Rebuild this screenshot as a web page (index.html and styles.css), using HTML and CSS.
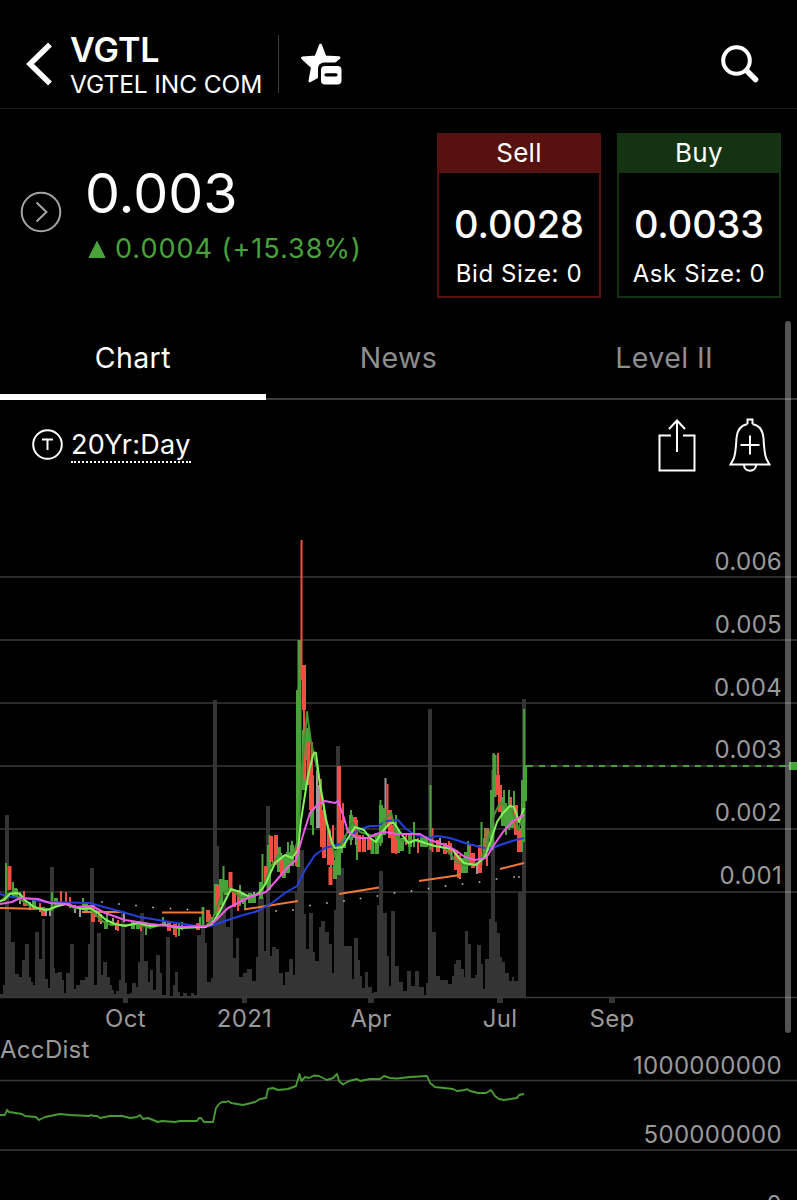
FILE: index.html
```html
<!DOCTYPE html>
<html lang="en">
<head>
  <meta charset="utf-8" />
  <meta name="viewport" content="width=device-width, initial-scale=1" />
  <title>VGTL – VGTEL INC COM</title>
  <link rel="stylesheet" href="styles.css">
</head>
<body>
  <header class="topbar">
    <svg class="back" viewBox="0 0 26 44" aria-label="Back"><path d="M24 2.5 4 22l20 19.5" /></svg>
    <div class="symbol">
      <h1>VGTL</h1>
      <p>VGTEL INC COM</p>
    </div>
    <svg class="watch" viewBox="0 0 42 42" aria-label="Remove from watchlist">
      <path class="star" d="M20.5 2.2 25 14l14 .7-9.500 8-8.500 2-2 8-9 5 2.500-13.500L2.500 15l13.500-1z" />
      <rect class="knock" x="18" y="19.500" width="26" height="24" rx="6" />
      <rect class="badge" x="21" y="23" width="20.500" height="18.500" rx="4" />
      <path class="minus" d="M26 31.800h10" />
    </svg>
    <svg class="search" viewBox="0 0 38 38" aria-label="Search">
      <circle cx="15.500" cy="15.500" r="13.300" />
      <path class="handle" d="m26 26 8.500 8.500" />
    </svg>
  </header>

  <section class="quote">
    <svg class="expand" viewBox="0 0 42 42"><circle cx="21" cy="21" r="19.300" /><path d="m16.500 11.500 10 9.500-10 9.500" /></svg>
    <div class="last">
      <p class="price">0.003</p>
      <p class="change"><svg viewBox="0 0 18 19"><path d="M9 1.500 17 17.500H1z" /></svg><span>0.0004 (+15.38%)</span></p>
    </div>
    <div class="side sell">
      <h2>Sell</h2>
      <p class="amount">0.0028</p>
      <p class="size">Bid Size: 0</p>
    </div>
    <div class="side buy">
      <h2>Buy</h2>
      <p class="amount">0.0033</p>
      <p class="size">Ask Size: 0</p>
    </div>
  </section>

  <nav class="tabs">
    <a class="active">Chart</a>
    <a>News</a>
    <a>Level II</a>
  </nav>

  <div class="toolbar">
    <svg class="time" viewBox="0 0 31 31"><circle cx="15.500" cy="15.500" r="14.300" /><path d="M10 10.500h11M15.500 10.500v10.500" /></svg>
    <span class="range">20Yr:Day</span>
    <svg class="share" viewBox="0 0 40 54" aria-label="Share"><path d="M14 17.500H2.500V52.500H37.500V17.500H26M20 34V2.500M12 11l8-8.500 8 8.500" /></svg>
    <svg class="alert" viewBox="0 0 42 54" aria-label="Add alert">
      <path d="M18.500 6V1.500h5V6M18.500 6C11 7.500 8 13 7.500 20 7 30 6.500 37 4.500 41L1.500 46.500h39L37.500 41C35.500 37 35 30 34.500 20 34 13 31 7.500 23.500 6M15 47c0 7.500 12 7.500 12 0M11.500 27h19M21 17.500v19" />
    </svg>
  </div>

  <svg class="chart" viewBox="0 480 797 720">
    <!-- volume -->
    <path class="volume" d="M0 998V994H3V985H5V815H9V912H11V942H15V974H19V977H22V960H25V944H29V977H31V982H33V985H35V932H39V959H42V919H45V979H48V988H50V867H54V968H55V973H58V972H62V980H64V993H66V973H70V944H74V989H76V985H80V980H85V977H88V944H90V868H94V985H97V933H101V975H103V962H107V977H110V985H112V990H114V994H116V991H119V980H121V911H125V983H127V994H130V993H132V983H136V987H138V962H140V913H144V961H148V982H150V970H153V990H156V955H160V973H162V995H166V937H170V996H173V985H175V972H178V992H180V996H183V993H187V996H191V993H194V995H197V935H201V907H205V943H207V982H211V978H213V700H217V846H219V883H222V890H226V927H230V907H233V958H236V938H239V977H243V973H247V969H252V981H256V957H258V897H264V951H266V806H270V956H272V947H276V949H279V973H283V985H285V972H289V959H293V975H295V892H297V687H299V850H304V914H306V949H309V913H313V952H315V961H319V927H321V921H325V932H329V944H332V973H334V910H336V746H340V868H344V946H352V979H354V938H358V960H360V976H362V988H365V972H368V987H372V993H374V992H377V905H379V871H383V913H387V956H389V986H391V911H395V966H399V982H403V991H407V971H411V986H415V971H419V987H424V995H426V983H428V709H432V932H436V976H440V980H448V984H452V976H454V964H456V960H461V969H464V977H465V931H468V944H471V978H475V975H477V945H481V964H483V989H485V959H489V919H491V770H495V922H497V933H500V957H502V962H505V973H509V981H512V977H514V981H518V892H522V699H526V998z" />

    <path class="grid" d="M0 577H797M0 640H797M0 703H797M0 766H797M0 829H797M0 892H797M0 997.500H797M0 1080.500H797M0 1150H797" />
    <path class="tick" d="M123 998v5h5v-5zM242 998v5h5v-5zM368 998v5h6v-5zM497 998v5h6v-5zM609 998v5h6v-5z" />

    <!-- candles: flat, up, down -->
    <path class="flat" d="M20 897V904M30 902V910M46 908V916M50 908V916M75 905V913M80 907V917M96 910V917M101 915V924M113 918V925M124 912V922M116 925V930M165 921V926M212 917V925M242 893V900M254 892V902M281 853V862M317 770V828M319 785V828M385.500 778V825M440 838V848M451.500 848V860M460 868V879M477 862V874M494 754V760M356 833V845" />
    <path class="up wide" d="M15 888V898M34 900V909M56 898V907M86 903V912M106 921V929M133 921V929M138 921V929M112 921V926M216 884V915M221 879V905M226 880V895M244 894V904M250 893V903M254 894V903M261 882V899M269 845V890M279 847V872M284 855V878M288 852V873M292 845V866M299.500 640V800M298 690V867M304 730V790M308 728V760M312 775V825M335 860V879M339 790V875M351 815V840M372.500 840V854M377 835V854M381 805V843M384 808V835M398 830V853M402 838V851M410 835V847M422 837V847M426 837V847M463 858V873M466 852V873M492 790V850M494.500 755V797M503 797V826M508 810V828M512 808V828M521 828V852M523 780V842M525 765V801" />
    <path class="up" d="M6 863V895M13 882V897M17 889V898M20 892V901M52 892V911M83 898V909M107 913V925M146 922V935M163 917V926M179 923V936M182 922V930M200 917V928M203 907V925M223.500 866V893M240 885V906M245 895V910M262.500 854V892M269.500 835V875M288 842V873M292 841V866M313 780V835M331 845V870M336 850V879M342 820V853M345 835V848M351 810V845M357 820V860M380.500 800V846M396 815V840M409.500 835V854M414 822V847M430.500 785V850M468 841V862M481.500 822V865M484 838V858M493.500 753V797M504 790V815M509 790V830M514 791V820M524.200 709V822M506 803V835" />
    <path class="down wide" d="M9.500 866V890M25 900V906M43 907V916M93 905V922M100 914V922M169 922V931M175 924V935M198 923V930M208 910V922M218 885V912M230.500 872V892M234 892V907M266 866V882M276 835V865M271 836V862M282 860V876M304 665V710M308.500 742V785M311 770V810M324 810V858M329 830V865M330.500 867V885M339 766V845M355 817V838M364 838V852M369 838V850M359 835V852M390 810V838M393 825V853M438 840V852M445 843V854M456 850V870M459 855V878M473 853V868M480 845V873M498 775V795M500 785V812M516 805V835M519 830V852" />
    <path class="down" d="M24 891V900M40 903V912M61 891V903M66 892V903M70 897V908M117 922V929M118 920V931M141 922V931M176 924V937M210 914V925M238 890V911M301.500 540V680M304 700V780M312 742V810M321 779V847M333 825V865M343 803V845M363 835V852M387.500 784V825M396 840V854M406 835V845M418 838V853M432.500 828V852M449 841V854M470 845V865M487 855V866M498 753V790M511 797V808M296 846V866M451 843V852" />
    <path class="mixed" d="M484 828H489V851H484z" />

    <!-- moving averages -->
    <path class="ma dots" d="M102 902h0M119 904h0M136 905.500h0M153 907.500h0M170.500 908.500h0M187.500 909.500h0M257 911h0M276 911h0M293 910h0M310 905.500h0M327 903h0M344 901h0M360.500 898.500h0M377.500 896h0M394.500 893h0M411.500 891h0M428.500 888.500h0M445.500 886h0M462.500 884h0M479.500 882h0M496.500 879h0M514 877h0M519 877h0" />
    <path class="ma orange" d="M0 908L42 909M82 912H123M162 912.500H204M244 909.500L298 901M339 894L379 887.500M419 881L460 875M500 869L524 863" />
    <path class="ma blue" d="M0 894 10 897 25 898 45 902 90 903 100 906 115 910 140 917 170 922 190 925 205 927 214 925 225 921 240 916 258 911 272 903 285 893 297 886 305 870 315 855 325 848 340 844 348 838 358 830 370 826 378 826 386 821 398 820 405 828 415 835 430 838 437 836 450 838 465 843 480 847 490 849 500 845 512 841 524 838" />
    <path class="ma green" d="M0 902 8 894 13 892 20 899 28 905 40 909 50 910 57 905 66 904 75 908 90 909 98 917 106 924 125 925 138 924 150 928 163 924 175 928 182 927 205 927 213 918 222 893 230 888 240 897 250 898 262 891 270 868 278 855 292 858 298 840 302 770 307 712 311 742 318 772 326 818 335 857 340 846 346 835 352 822 360 832 370 835 378 838 385 820 391 812 396 835 402 841 415 840 430 845 445 848 455 860 464 866 478 863 486 850 494 815 500 803 505 805 512 810 518 830 524 812" />
    <path class="ma lime" d="M0 901 4 900 10 894 16 893 20 894 25 900 34 907 45 910 50 909 58 906 66 904 75 907 83 909 90 908 98 913 106 920 115 924 125 926 138 923 150 926 165 925 180 928 205 927 212 924 220 911 231 889 240 892 250 897 258 894 265 885 275 863 285 855 292 858 298 850 301 820 308 776 313 755 314.500 752.500 316 753 320 785 326 820 332 843 335 848 343 847 348 838 355 827 364 830 370 838 376 842 382 832 390 823 394 823 400 832 408 843 416 840 425 843 435 846 452 849 458 857 464 863 476 865 485 857 491 840 497 822 503 813 510 806 514 807 519 822 524 808" />
    <path class="ma magenta" d="M0 904 12 902 20 898 38 899 50 903 68 904 75 907 92 906 105 913 125 920 150 924 180 927 207 926 214 922 228 908 240 902 250 897 266 892 275 882 288 867 296 860 303 835 310 813 318 804 325 801 335 803 338 801 344 818 348 832 358 838 368 838 376 834 385 832 396 834 410 834 420 834 430 840 445 845 455 850 465 857 475 860 486 858 494 845 503 832 513 821 520 817 524 815" />

    <!-- last price marker -->
    <path class="last-line" d="M527 766H790" />
    <path class="last-flag" d="M789 762h8v8h-8z" />

    <!-- accumulation / distribution -->
    <path class="acc" d="M0 1115 5 1115 7 1110 9 1112 22 1114 25 1116 36 1117 39 1120 45 1117 55 1115 60 1114 70 1115 89 1116 91 1115 94 1116 97 1116 100 1118 110 1116 122 1116 130 1118 137 1117 140 1115 143 1119 148 1118 153 1120 158 1122 162 1121 175 1122 180 1121 197 1121 199 1118 201 1118 204 1122 213 1122 216 1108 219 1104 222 1102 226 1102 228 1101 231 1103 243 1105 255 1102 260 1099 266 1098 268 1089 273 1088 278 1090 288 1089 296 1086 299.500 1074 301.500 1081 305 1077 309 1078 314 1075.500 319 1076 327 1080 333 1078 337 1074 339 1081 343 1084.500 349 1081 357 1079 360 1081 370 1079 380 1079 384 1076 390 1078 397 1078.500 410 1077 427 1076 430 1083 435 1087 453 1089 457 1091 465 1090 467 1089 470 1091 478 1093 486 1093 491 1090 495 1096 499 1099 504 1100 517 1098 519 1095 524 1094" />

    <g class="labels end">
      <text x="782" y="569.500">0.006</text>
      <text x="782" y="632.500">0.005</text>
      <text x="782" y="695.500">0.004</text>
      <text x="782" y="758">0.003</text>
      <text x="782" y="821">0.002</text>
      <text x="782" y="884">0.001</text>
      <text x="782" y="1073.500">1000000000</text>
      <text x="782" y="1143">500000000</text>
      <text x="782" y="1212.500">0</text>
    </g>
    <g class="labels mid">
      <text x="125.500" y="1027">Oct</text>
      <text x="244.500" y="1027">2021</text>
      <text x="371" y="1027">Apr</text>
      <text x="500" y="1027">Jul</text>
      <text x="612" y="1027">Sep</text>
    </g>
    <text class="labels" x="0" y="1057.500">AccDist</text>
  </svg>

  <div class="scroll-thumb"></div>
</body>
</html>
```

FILE: styles.css
```css
:root{
  --red:#57120f;
  --green:#143312;
  --up:#49a23a;
  --muted:#9a9a9a;
  --line:#3a3a3a;
}

*,*::before,*::after{box-sizing:border-box;margin:0;padding:0;}

body{
  position:relative;
  width:797px;
  height:1200px;
  overflow:hidden;
  background:#000;
  color:#fff;
  font-family:Inter,"Liberation Sans",sans-serif;
}

svg{display:block;flex:none;fill:none;stroke:#fff;}

/* Header */
.topbar{
  display:flex;
  align-items:center;
  height:109px;
  padding:19px 38px 0 26px;
  border-bottom:1px solid #1c1c1c;
}
.back{width:26px;height:44px;stroke-width:5.500;}
.symbol{
  display:flex;
  flex-direction:column;
  width:209px;
  height:58px;
  margin-left:18px;
  border-right:1px solid #3a3a3a;
}
.symbol h1{font-size:34px;line-height:30px;font-weight:600;padding-bottom:4px;}
.symbol p{font-size:24.500px;line-height:30px;letter-spacing:-.1px;white-space:nowrap;}
.watch{width:42px;height:42px;margin-left:21px;}
.star{fill:#fff;stroke-width:3;stroke-linejoin:round;}
.knock{fill:#000;stroke:none;}
.badge{fill:#fff;stroke:none;}
.minus{stroke:#000;stroke-width:3.200;stroke-linecap:round;}
.search{width:38px;height:38px;margin-left:auto;stroke-width:4;}
.handle{stroke-width:5.500;stroke-linecap:round;}

/* Quote */
.quote{
  display:flex;
  align-items:flex-start;
  height:211px;
  padding:24px 16px 0 20px;
}
.expand{width:42px;height:42px;margin-top:58px;stroke:#a5a5a5;stroke-width:2;}
.last{flex:1;padding:26px 0 0 23px;}
.price{font-size:55.500px;line-height:68px;}
.change{
  display:flex;
  align-items:center;
  gap:9px;
  padding:4px 0 0 3px;
  font-size:27px;
  line-height:36px;
  letter-spacing:1px;
  color:var(--up);
  white-space:nowrap;
}
.change svg{width:18px;height:19px;fill:var(--up);stroke:var(--up);stroke-linejoin:round;}
.side{width:164px;height:165px;border:2px solid;text-align:center;white-space:nowrap;}
.side + .side{margin-left:16px;}
.side h2{height:38px;font-size:26px;line-height:35px;font-weight:400;letter-spacing:.3px;}
.sell{border-color:var(--red);}
.sell h2{background:var(--red);}
.buy{border-color:var(--green);}
.buy h2{background:var(--green);}
.amount{padding-top:28px;font-size:38px;line-height:46px;font-weight:500;letter-spacing:-.1px;}
.size{padding-top:12px;font-size:24px;line-height:30px;letter-spacing:.6px;}

/* Tabs */
.tabs{display:flex;height:80px;border-bottom:2px solid var(--line);}
.tabs a{
  flex:1;
  height:80px;
  padding-bottom:4px;
  text-align:center;
  font-size:28.500px;
  line-height:76px;
  letter-spacing:.4px;
  color:#8e8e8e;
}
.tabs .active{color:#fff;border-bottom:6px solid #fff;}

/* Chart toolbar */
.toolbar{
  display:flex;
  align-items:flex-start;
  height:80px;
  padding:18px 26px 0 32px;
}
.time{width:31px;height:31px;margin-top:11px;stroke-width:2;}
.range{
  margin:10px 0 0 8px;
  font-size:27px;
  line-height:33px;
  letter-spacing:.3px;
  border-bottom:2px dotted #fff;
}
.share{width:40px;height:54px;margin-left:auto;stroke-width:2;}
.alert{width:42px;height:54px;margin-left:32px;stroke-width:2;}

/* Chart */
.chart{width:797px;height:720px;}
.volume,.tick{fill:#343434;stroke:none;}
.grid{stroke:#3a3a3a;stroke-width:1.600;}
.up,.down,.flat{stroke-width:2;}
.wide{stroke-width:4;}
.up{stroke:#49a23a;}
.down{stroke:#f24e42;}
.flat{stroke:#9b9b9b;}
.mixed{fill:#9c7a3c;stroke:none;}
.ma{stroke-width:2;stroke-linejoin:round;}
.dots{stroke:#c9c9c9;stroke-width:1.600;stroke-linecap:square;}
.orange{stroke:#f07838;}
.blue{stroke:#2140dc;}
.magenta{stroke:#ef5be6;}
.lime{stroke:#83f35c;}
.green{stroke:#45932f;}
.last-line{stroke:#49a23a;stroke-width:2;stroke-dasharray:6 6;}
.last-flag{fill:#49a23a;stroke:none;}
.acc{stroke:#499a35;stroke-width:1.900;stroke-linejoin:round;}
.labels{fill:var(--muted);stroke:none;font-size:24px;letter-spacing:.3px;}
.end{text-anchor:end;}
.mid{text-anchor:middle;}

.scroll-thumb{
  position:absolute;
  top:321px;
  right:6px;
  width:6px;
  height:712px;
  border-radius:3px;
  background:rgba(255,255,255,.33);
}
```
